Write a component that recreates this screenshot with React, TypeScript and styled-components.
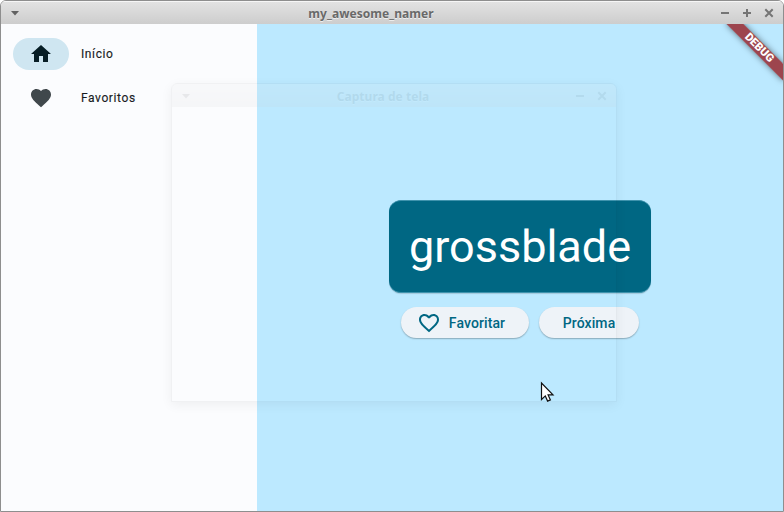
import React from "react";
import styled, { createGlobalStyle } from "styled-components";

const GlobalStyle = createGlobalStyle`
  * { box-sizing: border-box; }
  html, body { margin: 0; padding: 0; background: #fff; overflow: hidden; }
`;

const Window = styled.div`
  position: relative;
  display: flex;
  flex-direction: column;
  width: 784px;
  height: 512px;
  border: 1px solid #8e8e8e;
  border-radius: 6px 6px 0 0;
  overflow: hidden;
  background: #fbfcfe;
`;

const TitleBar = styled.header`
  display: grid;
  grid-template-columns: 54px 1fr 96px;
  align-items: center;
  flex: 0 0 23px;
  height: 23px;
  background: linear-gradient(#e3e3e3, #cdcdcd);
  box-shadow: inset 0 1px 0 #f6f6f6;
`;

const Title = styled.h1`
  margin: 0;
  padding-top: 2px;
  text-align: center;
  white-space: nowrap;
  font: 700 12px/20px "Noto Sans", "Open Sans", sans-serif;
  letter-spacing: 0.05px;
  color: #696969;
  text-shadow: 0 1px 0 rgba(255, 255, 255, 0.65);
`;

const MenuGlyph = styled.svg`
  display: block;
  width: 8px;
  height: 5px;
  margin: 2px 0 0 10px;
`;

const Controls = styled.div`
  display: flex;
  justify-content: flex-end;
  align-items: center;
  gap: 12px;
  padding-right: 9px;
`;

const ControlIcon = styled.svg`
  display: block;
  width: 10px;
  height: 10px;
  fill: none;
  stroke: #757575;
  stroke-width: 2;
`;

const Body = styled.div`
  display: flex;
  flex: 1;
  min-height: 0;
`;

const Rail = styled.nav`
  display: flex;
  flex-direction: column;
  gap: 12px;
  width: 256px;
  padding: 14px 12px;
`;

const RailItem = styled.div`
  display: flex;
  align-items: center;
  gap: 12px;
  height: 32px;
  font: 400 12px/16px Roboto, sans-serif;
  letter-spacing: 0.6px;
  color: #191c1e;
  -webkit-text-stroke: 0.15px #191c1e;
`;

const Indicator = styled.span<{ $active?: boolean }>`
  display: flex;
  align-items: center;
  justify-content: center;
  width: 56px;
  height: 32px;
  border-radius: 16px;
  background: ${(p) => (p.$active ? "#cfe6f1" : "transparent")};
  color: ${(p) => (p.$active ? "#071e26" : "#40484c")};
`;

const MaterialIcon = styled.svg<{ $size: number }>`
  display: block;
  width: ${(p) => p.$size}px;
  height: ${(p) => p.$size}px;
  fill: currentColor;
`;

const Page = styled.main`
  position: relative;
  display: flex;
  flex-direction: column;
  align-items: center;
  flex: 1;
  padding-top: 176px;
  overflow: hidden;
  background: #bce9ff;
`;

const WordCard = styled.div`
  display: flex;
  align-items: center;
  justify-content: center;
  width: 262px;
  height: 93px;
  border: solid #3f93ad;
  border-width: 1px 0;
  border-radius: 12px;
  background: #006783;
  background-clip: border-box;
  box-shadow: 0 1px 1px rgba(0, 0, 0, 0.14);
  font: 400 45px/52px Roboto, sans-serif;
  color: #fff;
`;

const Actions = styled.div`
  display: flex;
  gap: 10px;
  margin-top: 14px;
`;

const ActionButton = styled.button<{ $width: number; $icon?: boolean }>`
  display: flex;
  align-items: center;
  justify-content: center;
  gap: 8px;
  width: ${(p) => p.$width}px;
  height: 31px;
  padding: 0 ${(p) => (p.$icon ? 8 : 0)}px 0 0;
  border: 0;
  border-radius: 16px;
  background: #eef3f8;
  box-shadow: 0 1px 1.5px rgba(0, 0, 0, 0.28);
  font: 500 14px/20px Roboto, sans-serif;
  letter-spacing: 0.1px;
  color: #006783;
`;

const DebugBanner = styled.div`
  position: absolute;
  top: 18px;
  right: -16px;
  width: 80px;
  height: 12px;
  transform: rotate(45deg);
  background: rgba(151, 42, 49, 0.86);
  box-shadow: 0 0 6px rgba(0, 0, 0, 0.5);
  font: 900 11.2px/12px Roboto, sans-serif;
  text-align: center;
  color: #fff;
`;

const FadingDialog = styled.section`
  position: absolute;
  left: 170px;
  top: 82px;
  width: 446px;
  height: 319px;
  border: 1px solid rgba(0, 0, 0, 0.045);
  border-radius: 6px 6px 0 0;
  box-shadow: 0 3px 12px rgba(0, 0, 0, 0.055);
  pointer-events: none;
`;

const FadingTitleBar = styled.div`
  display: grid;
  grid-template-columns: 74px 1fr 96px;
  align-items: center;
  height: 23px;
  opacity: 0.12;
  background: linear-gradient(#e3e3e3, #cdcdcd);
  border-radius: 5px 5px 0 0;
`;

const Pointer = styled.svg`
  position: absolute;
  left: 539px;
  top: 380px;
  width: 16px;
  height: 24px;
`;

const HEART =
  "M12 21.35l-1.45-1.32C5.4 15.36 2 12.28 2 8.5 2 5.42 4.42 3 7.5 3c1.74 0 3.41.81 4.5 2.09C13.09 3.81 14.76 3 16.5 3 19.58 3 22 5.42 22 8.5c0 3.78-3.4 6.86-8.55 11.54L12 21.35z";
const HEART_OUTLINE =
  "M16.5 3c-1.74 0-3.41.81-4.5 2.09C10.91 3.81 9.24 3 7.5 3 4.42 3 2 5.42 2 8.5c0 3.78 3.4 6.86 8.55 11.54L12 21.35l1.45-1.32C18.6 15.36 22 12.28 22 8.5 22 5.42 19.58 3 16.5 3zm-4.4 15.55l-.1.1-.1-.1C7.14 14.24 4 11.39 4 8.5 4 6.5 5.5 5 7.5 5c1.54 0 3.04.99 3.57 2.36h1.87C13.46 5.99 14.96 5 16.5 5c2 0 3.5 1.5 3.5 3.5 0 2.89-3.14 5.74-7.9 10.05z";
const HOME = "M10 20v-6h4v6h5v-8h3L12 3 2 12h3v8z";

function Icon({ path, size }: { path: string; size: number }) {
  return (
    <MaterialIcon $size={size} viewBox="0 0 24 24">
      <path d={path} />
    </MaterialIcon>
  );
}

function WindowMenu() {
  return (
    <MenuGlyph viewBox="0 0 8 5">
      <path d="M0 0h8L4 4.6z" fill="#626262" />
    </MenuGlyph>
  );
}

function Control({ d }: { d: string }) {
  return (
    <ControlIcon viewBox="0 0 10 10">
      <path d={d} />
    </ControlIcon>
  );
}

const MINIMIZE = "M1 5h8";
const MAXIMIZE = "M1 5h8M5 1v8";
const CLOSE = "M1.3 1.3l7.4 7.4M8.7 1.3L1.3 8.7";

export default function App() {
  return (
    <>
      <GlobalStyle />
      <Window>
        <TitleBar>
          <WindowMenu />
          <Title>my_awesome_namer</Title>
          <Controls>
            <Control d={MINIMIZE} />
            <Control d={MAXIMIZE} />
            <Control d={CLOSE} />
          </Controls>
        </TitleBar>
        <Body>
          <Rail>
            <RailItem>
              <Indicator $active>
                <Icon path={HOME} size={24} />
              </Indicator>
              Início
            </RailItem>
            <RailItem>
              <Indicator>
                <Icon path={HEART} size={24} />
              </Indicator>
              Favoritos
            </RailItem>
          </Rail>
          <Page>
            <WordCard>grossblade</WordCard>
            <Actions>
              <ActionButton $width={128} $icon>
                <Icon path={HEART_OUTLINE} size={24} />
                Favoritar
              </ActionButton>
              <ActionButton $width={100}>Próxima</ActionButton>
            </Actions>
            <DebugBanner>DEBUG</DebugBanner>
          </Page>
        </Body>
        <FadingDialog>
          <FadingTitleBar>
            <WindowMenu />
            <Title>Captura de tela</Title>
            <Controls>
              <Control d={MINIMIZE} />
              <Control d={CLOSE} />
            </Controls>
          </FadingTitleBar>
        </FadingDialog>
        <Pointer viewBox="0 0 16 24">
          <path
            d="M1.5 2V18.5l3.8-3.6 2.3 5.2 2.8-1.2-2.3-5h4.9z"
            fill="#fff"
            stroke="#111"
            strokeWidth="1.2"
          />
        </Pointer>
      </Window>
    </>
  );
}
